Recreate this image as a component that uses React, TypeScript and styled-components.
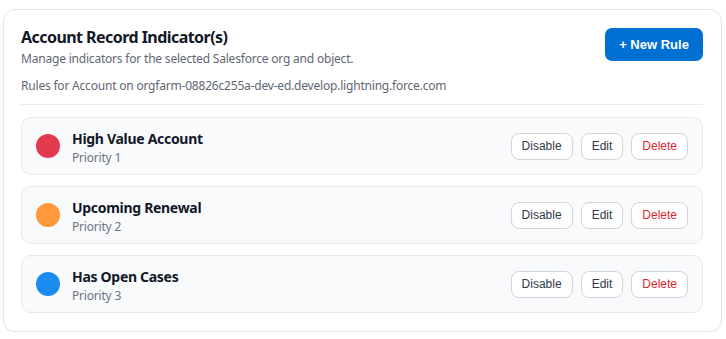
import React, { FC } from 'react';
import styled, { createGlobalStyle } from 'styled-components';

type Rule = {
  id: number,
  name: string,
  priority: number,
  color: string,
};

const rules: Rule[] = [
  { id: 1, name: 'High Value Account', priority: 1, color: '#e23a4f' },
  { id: 2, name: 'Upcoming Renewal', priority: 2, color: '#fe983b' },
  { id: 3, name: 'Has Open Cases', priority: 3, color: '#1a8cef' },
];

const GlobalStyle = createGlobalStyle`
  body {
    margin: 0;
    background: #ffffff;
    font-family: 'Noto Sans', 'Open Sans', sans-serif;
    color: #111827;
  }
`;

const Card = styled.section`
  margin: 9px 4px 0 3px;
  height: 323px;
  box-sizing: border-box;
  border: 1px solid #e3e6ea;
  border-radius: 12px;
  background: #fff;
  box-shadow: 0 1px 2px rgba(15, 23, 42, 0.04);
  padding: 15px 18px 18px 17px;
`;

const Header = styled.header`
  display: flex;
  justify-content: space-between;
  align-items: flex-start;
  padding-bottom: 10px;
  border-bottom: 1px solid #e8ebef;
  margin-bottom: 12px;
`;

const Title = styled.h1`
  margin: 1px 0 0;
  font-size: 16px;
  line-height: 22px;
  font-weight: 700;
  letter-spacing: -0.55px;
  color: #111827;
`;

const Subtitle = styled.p`
  margin: 2px 0 0;
  font-size: 12px;
  line-height: 17px;
  letter-spacing: -0.2px;
  color: #5f6673;
`;

const Context = styled.p`
  margin: 10px 0 0;
  font-size: 12px;
  line-height: 17px;
  letter-spacing: -0.2px;
  color: #5f6673;
`;

const PrimaryButton = styled.button`
  margin-top: 3px;
  height: 33px;
  width: 98px;
  border: none;
  border-radius: 7px;
  background: #0070d2;
  color: #fff;
  font-family: 'Liberation Sans', Arial, sans-serif;
  font-size: 13px;
  font-weight: 700;
  cursor: pointer;
`;

const List = styled.ul`
  list-style: none;
  margin: 0;
  padding: 0;
  display: flex;
  flex-direction: column;
  gap: 11px;
`;

const Row = styled.li`
  display: flex;
  align-items: center;
  height: 58px;
  box-sizing: border-box;
  padding: 0 14px 0 14px;
  border: 1px solid #e6e9ee;
  border-radius: 10px;
  background: #f9fafc;
`;

const Dot = styled.span<{ $color: string }>`
  width: 24px;
  height: 24px;
  border-radius: 50%;
  background: ${(p) => p.$color};
  flex-shrink: 0;
`;

const Info = styled.div`
  margin-left: 12px;
  padding-top: 4px;
  flex: 1;
  display: flex;
  flex-direction: column;
`;

const RuleName = styled.span`
  font-size: 14px;
  line-height: 18px;
  font-weight: 700;
  letter-spacing: -0.3px;
  color: #111827;
`;

const Priority = styled.span`
  margin-top: 1px;
  font-size: 12px;
  line-height: 18px;
  letter-spacing: -0.2px;
  color: #6b7280;
`;

const Actions = styled.div`
  display: flex;
  gap: 8px;
`;

const ActionButton = styled.button<{ $danger?: boolean }>`
  height: 27px;
  padding: 0 10px;
  border: 1px solid #d0d5dc;
  border-radius: 8px;
  background: #fff;
  font-family: 'Liberation Sans', Arial, sans-serif;
  font-size: 12px;
  color: ${(p) => (p.$danger ? '#d9292f' : '#2f3a4a')};
  cursor: pointer;
`;

const App: FC = () => (
  <>
    <GlobalStyle />
    <Card>
      <Header>
        <div>
          <Title>Account Record Indicator(s)</Title>
          <Subtitle>Manage indicators for the selected Salesforce org and object.</Subtitle>
          <Context>Rules for Account on orgfarm-08826c255a-dev-ed.develop.lightning.force.com</Context>
        </div>
        <PrimaryButton>+ New Rule</PrimaryButton>
      </Header>
      <List>
        {rules.map((rule) => (
          <Row key={rule.id}>
            <Dot $color={rule.color} />
            <Info>
              <RuleName>{rule.name}</RuleName>
              <Priority>
                Priority
                {' '}
                {rule.priority}
              </Priority>
            </Info>
            <Actions>
              <ActionButton>Disable</ActionButton>
              <ActionButton>Edit</ActionButton>
              <ActionButton $danger>Delete</ActionButton>
            </Actions>
          </Row>
        ))}
      </List>
    </Card>
  </>
);

export default App;
